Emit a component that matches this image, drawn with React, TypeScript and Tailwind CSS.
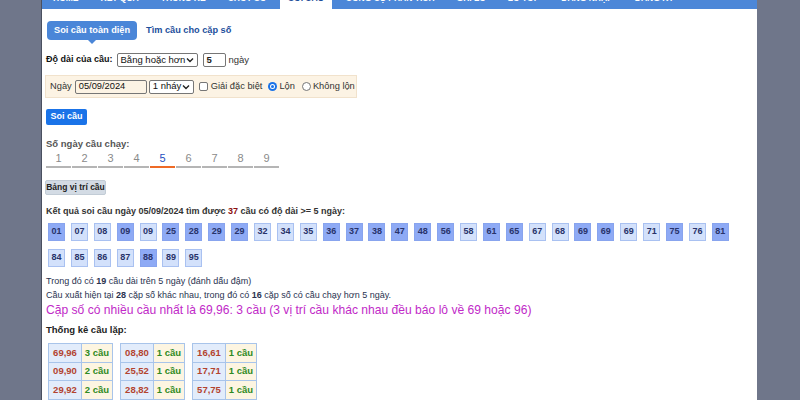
import React from "react";

const navItems = [
  "HOME",
  "KẾT QUẢ",
  "THỐNG KÊ",
  "CHỐT SỐ",
  "SOI CẦU",
  "CÔNG CỤ PHÂN TÍCH",
  "GHI LÔ",
  "LÔ TOP",
  "ĐĂNG NHẬP",
  "ĐĂNG KÝ",
];

// [number, long run]
const row1: [string, boolean][] = [
  ["01", true], ["07", false], ["08", false], ["09", true], ["09", false],
  ["25", true], ["28", true], ["29", true], ["29", true], ["32", false],
  ["34", false], ["35", false], ["36", true], ["37", true], ["38", true],
  ["47", true], ["48", true], ["56", true], ["58", false], ["61", true],
  ["65", true], ["67", false], ["68", false], ["69", true], ["69", true],
  ["69", false], ["71", false], ["75", true], ["76", false], ["81", true],
];
const row2: [string, boolean][] = [
  ["84", false], ["85", false], ["86", false], ["87", false], ["88", true],
  ["89", false], ["95", false],
];

const stats = [
  [["69,96", "3 cầu"], ["09,90", "2 cầu"], ["29,92", "2 cầu"], ["38,83", "2 cầu"]],
  [["08,80", "1 cầu"], ["25,52", "1 cầu"], ["28,82", "1 cầu"], ["34,43", "1 cầu"]],
  [["16,61", "1 cầu"], ["17,71", "1 cầu"], ["57,75", "1 cầu"], ["58,85", "1 cầu"]],
];

function Chevron() {
  return (
    <svg width="8" height="6" viewBox="0 0 8 6" className="ml-auto shrink-0">
      <path d="M1 1.5 L4 4.5 L7 1.5" fill="none" stroke="#222" strokeWidth="1.4" />
    </svg>
  );
}

function Select({ label, w }: { label: string; w: string }) {
  return (
    <div className={`${w} h-[14px] border border-[#767676] rounded-[2px] bg-white flex items-center px-[3px] text-[9.5px] text-[#111] whitespace-nowrap`}>
      <span>{label}</span>
      <Chevron />
    </div>
  );
}

function NumBox({ n, hot }: { n: string; hot: boolean }) {
  return (
    <div
      className={`w-[17px] h-[18px] flex items-center justify-center text-[9px] font-bold text-[#28336a] border ${
        hot ? "bg-[#8eaaf5] border-[#88a4ee]" : "bg-[#d3e1fb] border-[#a9c1f1]"
      }`}
    >
      {n}
    </div>
  );
}

export default function App() {
  return (
    <div className="w-[800px] h-[400px] overflow-hidden bg-[#6f768a] font-['Liberation_Sans',Arial,sans-serif]">
      <div className="ml-[41px] w-[716px] h-[400px] bg-white border-l border-[#4a5060] overflow-hidden">
        <nav className="h-[30px] -mt-[21px] bg-[#4c87d8] flex pl-[3px] gap-[6px]">
          {navItems.map((t) => (
            <div
              key={t}
              className={`px-[8px] pb-[4px] flex items-end whitespace-nowrap text-[8.5px] leading-[13px] font-bold ${
                t === "SOI CẦU" ? "bg-white text-[#1f4e9a]" : "text-white"
              }`}
            >
              {t}
            </div>
          ))}
        </nav>

        <div className="pl-[4px] text-[9px] text-[#222]">
          <div className="mt-[12px] flex items-center">
            <div className="relative ml-[1px] h-[19px] px-[7px] rounded-[4px] bg-[#4a86d8] text-white font-bold text-[9.2px] flex items-center">
              Soi cầu toàn diện
              <span className="absolute left-[41px] -bottom-[4px] w-0 h-0 border-l-[4px] border-r-[4px] border-t-[4px] border-l-transparent border-r-transparent border-t-[#4a86d8]" />
            </div>
            <div className="ml-[9px] font-bold text-[9.2px] text-[#1d4f9c]">Tìm cầu cho cặp số</div>
          </div>

          <div className="mt-[13px] flex items-center h-[14px]">
            <span className="font-bold text-[#111]">Độ dài của cầu:</span>
            <div className="ml-[4px]">
              <Select label="Bằng hoặc hơn" w="w-[81px]" />
            </div>
            <div className="ml-[5px] w-[23px] h-[14px] border border-[#767676] rounded-[2px] flex items-center pl-[3px] font-bold text-[9.5px]">
              5
            </div>
            <span className="ml-[3px] text-[9.5px] text-[#333]">ngày</span>
          </div>

          <div className="mt-[8px] -ml-[1px] w-[312px] h-[23px] bg-[#fcf3e4] border border-[#f1e2cc] flex items-center pl-[4px] text-[9.3px] text-[#333] whitespace-nowrap">
            <span>Ngày</span>
            <div className="ml-[3px] shrink-0 w-[72px] h-[14px] border border-[#767676] rounded-[2px] flex items-center pl-[3px] text-[#111]">
              05/09/2024
            </div>
            <div className="ml-[2px] shrink-0">
              <Select label="1 nháy" w="w-[45px]" />
            </div>
            <span className="ml-[5px] shrink-0 w-[9px] h-[9px] border border-[#767676] rounded-[2px] bg-white" />
            <span className="ml-[3px]">Giải đặc biệt</span>
            <span className="ml-[6px] shrink-0 w-[9px] h-[9px] rounded-full bg-[#1a73e8] flex items-center justify-center">
              <span className="w-[5px] h-[5px] rounded-full bg-white flex items-center justify-center">
                <span className="w-[3px] h-[3px] rounded-full bg-[#1a73e8]" />
              </span>
            </span>
            <span className="ml-[2px]">Lộn</span>
            <span className="ml-[7px] shrink-0 w-[9px] h-[9px] rounded-full border border-[#767676] bg-white" />
            <span className="ml-[2px]">Không lộn</span>
          </div>

          <button className="mt-[11px] w-[41px] h-[16px] rounded-[2px] bg-[#1a73e8] text-white font-bold text-[9px] flex items-center justify-center">
            Soi cầu
          </button>

          <div className="mt-[13px] font-bold text-[9.5px] text-[#555] leading-[11px]">Số ngày cầu chạy:</div>
          <div className="mt-[2px] flex gap-[1px]">
            {[1, 2, 3, 4, 5, 6, 7, 8, 9].map((n) => (
              <div
                key={n}
                className={`w-[25px] h-[17px] flex items-center justify-center text-[11px] border-b-2 ${
                  n === 5 ? "text-[#1f4fc0] border-[#ee6a26]" : "text-[#8a8a8a] border-[#b5b5b5]"
                }`}
              >
                {n}
              </div>
            ))}
          </div>

          <button className="mt-[12px] -ml-[1px] w-[61px] h-[15px] rounded-[2px] bg-[#d3dbe4] border border-[#c2ccd6] text-[8.5px] font-bold text-[#222] flex items-center justify-center">
            Bảng vị trí cầu
          </button>

          <div className="mt-[10px] font-bold text-[9px] text-[#333] leading-[12px]">
            Kết quả soi cầu ngày 05/09/2024 tìm được <span className="text-[#8b1010]">37</span> cầu có độ dài &gt;= 5 ngày:
          </div>

          <div className="mt-[6px] ml-[2px] flex flex-col gap-[8px]">
            <div className="flex gap-[5.9px]">
              {row1.map(([n, h], i) => (
                <NumBox key={i} n={n} hot={h} />
              ))}
            </div>
            <div className="flex gap-[5.9px]">
              {row2.map(([n, h], i) => (
                <NumBox key={i} n={n} hot={h} />
              ))}
            </div>
          </div>

          <div className="mt-[7px] text-[9px] leading-[14px] text-[#2a3350]">
            <div>
              Trong đó có <b>19</b> cầu dài trên 5 ngày (đánh dấu đậm)
            </div>
            <div>
              Cầu xuất hiện tại <b>28</b> cặp số khác nhau, trong đó có <b>16</b> cặp số có cầu chạy hơn 5 ngày.
            </div>
          </div>
          <div className="text-[12.1px] leading-[16px] text-[#c12ac8]">
            Cặp số có nhiều cầu nhất là 69,96: 3 cầu (3 vị trí cầu khác nhau đều báo lô về 69 hoặc 96)
          </div>

          <div className="mt-[6px] font-bold text-[9.5px] leading-[12px] text-[#222]">Thống kê cầu lặp:</div>

          <div className="mt-[7px] ml-[2px] flex gap-[7px]">
            {stats.map((tbl, ti) => (
              <table key={ti} className="border-collapse text-[9.5px] font-bold">
                <tbody>
                  {tbl.map(([p, c]) => (
                    <tr key={p} className="h-[18.5px]">
                      <td className="w-[33px] border border-[#a8c4ea] bg-[#e2ecfb] text-[#b3432f] text-center">{p}</td>
                      <td className="w-[31px] border border-[#a8c4ea] bg-[#fdf5e1] text-[#2f8a23] text-center">{c}</td>
                    </tr>
                  ))}
                </tbody>
              </table>
            ))}
          </div>
        </div>
      </div>
    </div>
  );
}
